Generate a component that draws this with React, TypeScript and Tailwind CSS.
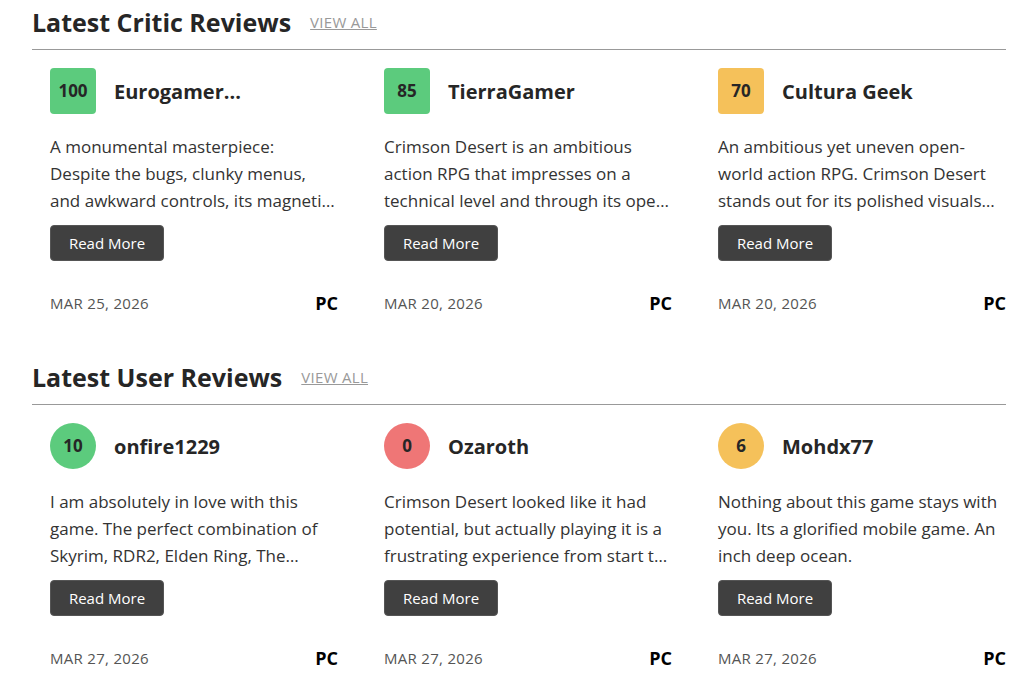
const critic = [
  {
    score: "100",
    color: "bg-[#5ccb7d]",
    name: "Eurogamer...",
    text: "A monumental masterpiece: Despite the bugs, clunky menus, and awkward controls, its magneti…",
    date: "MAR 25, 2026",
  },
  {
    score: "85",
    color: "bg-[#5ccb7d]",
    name: "TierraGamer",
    text: "Crimson Desert is an ambitious action RPG that impresses on a technical level and through its ope…",
    date: "MAR 20, 2026",
  },
  {
    score: "70",
    color: "bg-[#f5c15a]",
    name: "Cultura Geek",
    text: "An ambitious yet uneven open-world action RPG. Crimson Desert stands out for its polished visuals…",
    date: "MAR 20, 2026",
  },
];

const users = [
  {
    score: "10",
    color: "bg-[#5ccb7d]",
    name: "onfire1229",
    text: "I am absolutely in love with this game. The perfect combination of Skyrim, RDR2, Elden Ring, The…",
    date: "MAR 27, 2026",
  },
  {
    score: "0",
    color: "bg-[#ef7676]",
    name: "Ozaroth",
    text: "Crimson Desert looked like it had potential, but actually playing it is a frustrating experience from start t…",
    date: "MAR 27, 2026",
  },
  {
    score: "6",
    color: "bg-[#f5c15a]",
    name: "Mohdx77",
    text: "Nothing about this game stays with you. Its a glorified mobile game. An inch deep ocean.",
    date: "MAR 27, 2026",
  },
];

type Review = (typeof critic)[number];

const ReviewCard = ({ r, round }: { r: Review; round?: boolean }) => {
  return (
    <div className="flex flex-col">
      <div className="flex items-center gap-[18px]">
        <div
          className={`${r.color} ${round ? "rounded-full" : "rounded-[4px]"} w-[46px] h-[46px] shrink-0 flex items-center justify-center text-[17px] font-bold text-[#262626]`}
        >
          {r.score}
        </div>
        <p className="text-[20px] leading-[28px] font-bold text-[#262626] mt-[1px]">{r.name}</p>
      </div>
      <p className="mt-[19px] text-[17px] leading-[27px] text-[#333] h-[81px]">{r.text}</p>
      <button className="mt-[11px] w-[114px] h-[36px] leading-[20px] rounded-[4px] bg-[#404040] border border-[#555] text-white text-[15px]">
        Read More
      </button>
      <div className="mt-[31px] flex items-center justify-between leading-[22px]">
        <span className="text-[15px] text-[#555] tracking-[0.3px]">{r.date}</span>
        <span className="text-[18px] font-bold text-black">PC</span>
      </div>
    </div>
  );
};

const Section = ({ title, items, round }: { title: string; items: Review[]; round?: boolean }) => {
  return (
    <section className="pb-[41px]">
      <div className="h-[50px] pb-[6px] flex items-center gap-[19px] border-b border-[#999]">
        <h2 className="text-[25px] leading-[32px] font-bold text-[#262626]">{title}</h2>
        <a href="#" className="text-[15px] text-[#999] underline mt-[2px] tracking-[0.3px]">
          VIEW ALL
        </a>
      </div>
      <div className="grid grid-cols-3 gap-[46px] pl-[18px] pt-[18px]">
        {items.map((r) => (
          <ReviewCard key={r.name} r={r} round={round} />
        ))}
      </div>
    </section>
  );
};

const App = () => {
  return (
    <div className="bg-white min-h-screen px-[32px] pr-[18px] font-['Open_Sans',sans-serif]">
      <Section title="Latest Critic Reviews" items={critic} />
      <Section title="Latest User Reviews" items={users} round />
    </div>
  );
};

export default App;
